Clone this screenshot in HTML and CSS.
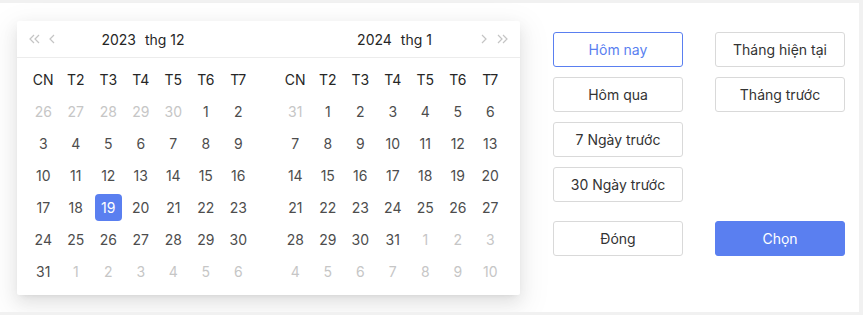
FILE: index.html
```html
<!DOCTYPE html>
<html lang="vi">

<head>
    <meta charset="UTF-8" />
    <title>Chọn khoảng ngày</title>
    <link rel="stylesheet" href="styles.css">
</head>

<body>
    <div class="shell">
        <div class="picker">
            <div class="panel">
                <div class="panel-header">
                    <span class="nav">
                        <svg width="11" height="10" viewBox="0 0 11 10"><path d="M5 1 1 5l4 4M10 1 6 5l4 4" /></svg>
                        <svg width="6" height="10" viewBox="0 0 6 10"><path d="M5 1 1 5l4 4" /></svg>
                    </span>
                    <span class="title">2023<span class="month">thg 12</span></span>
                </div>
                <div class="days">
                    <span class="wd">CN</span><span class="wd">T2</span><span class="wd">T3</span><span class="wd">T4</span><span class="wd">T5</span><span class="wd">T6</span><span class="wd">T7</span>
                    <span class="off">26</span><span class="off">27</span><span class="off">28</span><span class="off">29</span><span class="off">30</span><span>1</span><span>2</span>
                    <span>3</span><span>4</span><span>5</span><span>6</span><span>7</span><span>8</span><span>9</span>
                    <span>10</span><span>11</span><span>12</span><span>13</span><span>14</span><span>15</span><span>16</span>
                    <span>17</span><span>18</span><span class="sel"><b>19</b></span><span>20</span><span>21</span><span>22</span><span>23</span>
                    <span>24</span><span>25</span><span>26</span><span>27</span><span>28</span><span>29</span><span>30</span>
                    <span>31</span><span class="off">1</span><span class="off">2</span><span class="off">3</span><span class="off">4</span><span class="off">5</span><span class="off">6</span>
                </div>
            </div>
            <div class="panel">
                <div class="panel-header">
                    <span class="title">2024<span class="month">thg 1</span></span>
                    <span class="nav nav-right">
                        <svg width="6" height="10" viewBox="0 0 6 10"><path d="M1 1l4 4-4 4" /></svg>
                        <svg width="11" height="10" viewBox="0 0 11 10"><path d="M1 1l4 4-4 4M6 1l4 4-4 4" /></svg>
                    </span>
                </div>
                <div class="days">
                    <span class="wd">CN</span><span class="wd">T2</span><span class="wd">T3</span><span class="wd">T4</span><span class="wd">T5</span><span class="wd">T6</span><span class="wd">T7</span>
                    <span class="off">31</span><span>1</span><span>2</span><span>3</span><span>4</span><span>5</span><span>6</span>
                    <span>7</span><span>8</span><span>9</span><span>10</span><span>11</span><span>12</span><span>13</span>
                    <span>14</span><span>15</span><span>16</span><span>17</span><span>18</span><span>19</span><span>20</span>
                    <span>21</span><span>22</span><span>23</span><span>24</span><span>25</span><span>26</span><span>27</span>
                    <span>28</span><span>29</span><span>30</span><span>31</span><span class="off">1</span><span class="off">2</span><span class="off">3</span>
                    <span class="off">4</span><span class="off">5</span><span class="off">6</span><span class="off">7</span><span class="off">8</span><span class="off">9</span><span class="off">10</span>
                </div>
            </div>
        </div>

        <div class="actions">
            <div class="presets">
                <button class="btn active">Hôm nay</button>
                <button class="btn">Tháng hiện tại</button>
                <button class="btn">Hôm qua</button>
                <button class="btn">Tháng trước</button>
                <button class="btn">7 Ngày trước</button>
                <span></span>
                <button class="btn">30 Ngày trước</button>
                <span></span>
            </div>
            <div class="footer">
                <button class="btn">Đóng</button>
                <button class="btn primary">Chọn</button>
            </div>
        </div>
    </div>
</body>

</html>
```
FILE: styles.css
```css
:root {
    --blue: #5a7ff0;
    --text: #333333;
    --day: #4d4d4d;
    --muted: #c6c6c6;
    --border: #d9d9d9;
}

body {
    margin: 0;
    background-color: #f1f1f1;
    font-family: Inter, "Noto Sans", sans-serif;
    font-size: 14px;
    color: var(--text);
}

.shell {
    margin-top: 3px;
    width: 859px;
    height: 309px;
    box-sizing: border-box;
    padding: 18px 0 0 17px;
    background-color: #fff;
    display: flex;
    align-items: flex-start;
}

.picker {
    display: flex;
    background-color: #fff;
    border-radius: 2px;
    box-shadow: 0 3px 6px -4px rgba(0, 0, 0, 0.12),
        0 6px 16px 0 rgba(0, 0, 0, 0.08),
        0 9px 28px 8px rgba(0, 0, 0, 0.05);
}

.panel {
    width: 252px;
}

.panel + .panel {
    width: 251px;
}

.panel-header {
    position: relative;
    height: 36px;
    display: flex;
    align-items: center;
    justify-content: center;
    border-bottom: 1px solid #ececec;
}

.title {
    color: #262626;
}

.month {
    margin-left: 9px;
}

.nav {
    position: absolute;
    left: 12px;
    top: 13px;
    display: flex;
    gap: 9px;
}

.nav-right {
    left: auto;
    right: 12px;
    gap: 10px;
}

.nav svg path {
    fill: none;
    stroke: #c4c4c4;
    stroke-width: 1.2;
}

.days {
    display: grid;
    grid-template-columns: repeat(7, 32.5px);
    grid-auto-rows: 32px;
    padding: 5px 0 8px 10px;
}

.days span {
    display: flex;
    align-items: center;
    justify-content: center;
    color: var(--day);
}

.days .wd {
    color: #262626;
}

.days .off {
    color: var(--muted);
}

.days .sel b {
    width: 27px;
    height: 27px;
    display: flex;
    align-items: center;
    justify-content: center;
    border-radius: 4px;
    background-color: var(--blue);
    color: #fff;
    font-weight: 400;
}

.actions {
    margin: 11px 0 0 33px;
}

.presets,
.footer {
    display: grid;
    grid-template-columns: 130px 130px;
    grid-auto-rows: 35px;
    column-gap: 32px;
    row-gap: 10px;
}

.footer {
    margin-top: 19px;
}

.btn {
    border: 1px solid var(--border);
    border-radius: 3px;
    background-color: #fff;
    color: var(--text);
    font-family: inherit;
    font-size: 14px;
    cursor: pointer;
}

.btn.active {
    border-color: var(--blue);
    color: var(--blue);
}

.btn.primary {
    border-color: var(--blue);
    background-color: var(--blue);
    color: #fff;
}
```
